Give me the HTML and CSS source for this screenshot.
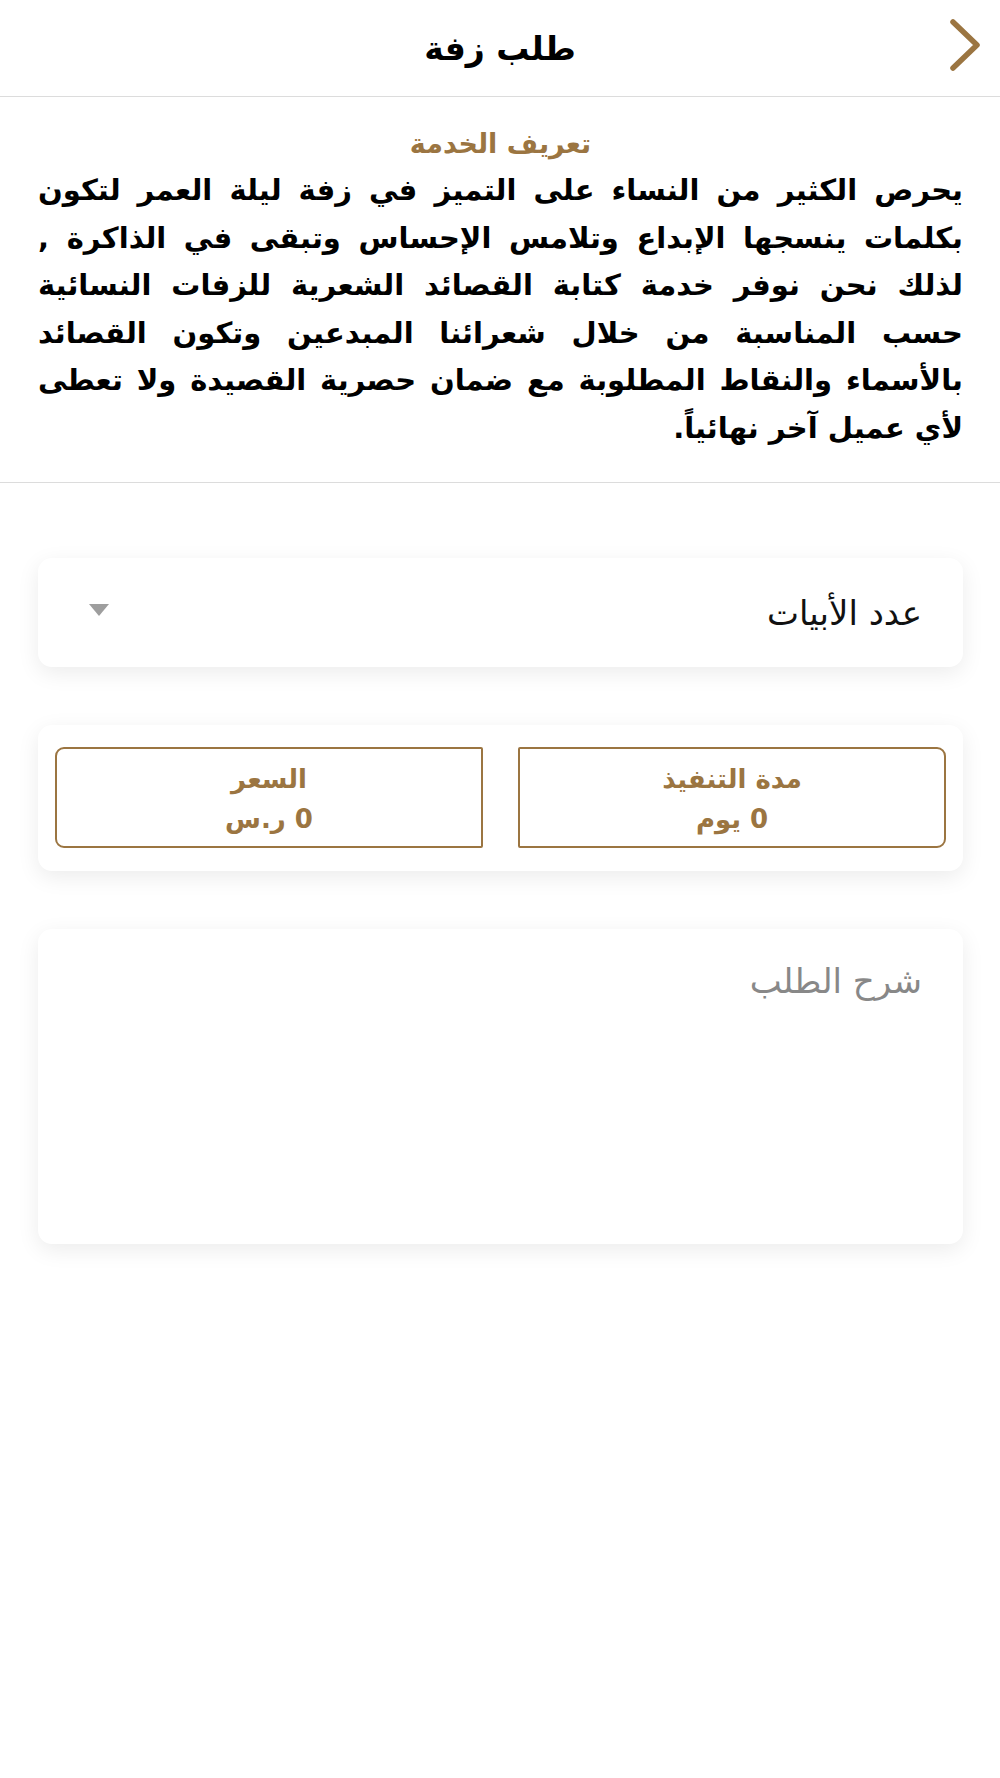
FILE: index.html
```html
<!DOCTYPE html>
<html lang="ar" dir="rtl">

<head>
    <meta charset="UTF-8" />
    <meta name="viewport" content="width=device-width, initial-scale=1" />
    <title>طلب زفة</title>
    <link rel="stylesheet" href="styles.css">
</head>

<body>
    <header class="top-bar">
        <button class="back-btn" aria-label="رجوع">
            <svg width="34" height="54" viewBox="0 0 34 54">
                <polyline points="5,3 29,26 5,49" fill="none" stroke="#9b7541" stroke-width="5.5"
                    stroke-linecap="round" stroke-linejoin="round" />
            </svg>
        </button>
        <h1 class="page-title">طلب زفة</h1>
    </header>

    <section class="intro">
        <h2 class="intro-title">تعريف الخدمة</h2>
        <p class="intro-text">
            <span class="line">يحرص الكثير من النساء على التميز في زفة ليلة العمر لتكون</span>
            <span class="line">بكلمات ينسجها الإبداع وتلامس الإحساس وتبقى في الذاكرة ,</span>
            <span class="line">لذلك نحن نوفر خدمة كتابة القصائد الشعرية للزفات النسائية</span>
            <span class="line">حسب المناسبة من خلال شعرائنا المبدعين وتكون القصائد</span>
            <span class="line">بالأسماء والنقاط المطلوبة مع ضمان حصرية القصيدة ولا تعطى</span>
            <span class="line last">لأي عميل آخر نهائياً.</span>
        </p>
    </section>

    <main class="form">
        <div class="card select-card">
            <span class="select-label">عدد الأبيات</span>
            <span class="select-arrow"></span>
        </div>

        <div class="card info-card">
            <div class="info-box first">
                <div>مدة التنفيذ</div>
                <div>0 يوم</div>
            </div>
            <div class="info-box last">
                <div>السعر</div>
                <div>0 ر.س</div>
            </div>
        </div>

        <div class="card notes-card">
            <textarea class="notes" placeholder="شرح الطلب"></textarea>
        </div>
    </main>
</body>

</html>
```

FILE: styles.css
```css
body {
    margin: 0;
    background: #fff;
    color: #000;
    font-family: "DejaVu Sans", sans-serif;
}

.top-bar {
    position: relative;
    height: 96px;
    border-bottom: 1px solid #dcdcdc;
    display: flex;
    align-items: center;
    justify-content: center;
}

.page-title {
    margin: 0;
    font-size: 33px;
    font-weight: bold;
}

.back-btn {
    position: absolute;
    right: 18px;
    top: 19px;
    background: none;
    border: none;
    padding: 0;
    cursor: pointer;
}

.intro {
    padding: 30px 37px 30px 38px;
    border-bottom: 1px solid #dcdcdc;
    text-align: center;
}

.intro-title {
    margin: 0 0 6px;
    font-size: 27px;
    line-height: 34px;
    font-weight: bold;
    color: #9b7541;
}

.intro-text {
    margin: 0;
    font-size: 29px;
    font-weight: bold;
    line-height: 47.5px;
}

.intro-text .line {
    display: block;
    text-align: justify;
    text-align-last: justify;
}

.intro-text .line.last {
    text-align-last: start;
}

.form {
    padding: 75px 37px 40px 38px;
    display: flex;
    flex-direction: column;
    gap: 58px;
}

.card {
    background: #fff;
    border-radius: 14px;
    box-shadow: 0 6px 22px rgba(0, 0, 0, 0.08);
}

.select-card {
    height: 109px;
    padding: 0 41px 0 51px;
    display: flex;
    align-items: center;
    justify-content: space-between;
    box-sizing: border-box;
}

.select-label {
    font-size: 34px;
    color: #111;
}

.select-arrow {
    width: 0;
    height: 0;
    border-left: 10px solid transparent;
    border-right: 10px solid transparent;
    border-top: 12px solid #9e9e9e;
    margin-bottom: 6px;
}

.info-card {
    padding: 22px 17px 23px;
    display: flex;
    gap: 35px;
}

.info-box {
    flex: 1;
    height: 101px;
    box-sizing: border-box;
    border: 2px solid #9b7541;
    display: flex;
    flex-direction: column;
    align-items: center;
    justify-content: center;
    color: #9b7541;
    font-size: 26px;
    font-weight: bold;
    line-height: 40px;
    padding-top: 2px;
}

.info-box.first {
    border-radius: 2px 9px 9px 2px;
}

.info-box.last {
    border-radius: 9px 2px 2px 9px;
}

.notes-card {
    height: 315px;
    padding: 32px 41px;
    box-sizing: border-box;
}

.notes {
    width: 100%;
    height: 100%;
    border: none;
    outline: none;
    resize: none;
    padding: 0;
    font-family: inherit;
    font-size: 34px;
    color: #111;
    background: transparent;
}

.notes::placeholder {
    color: #888;
}
```
